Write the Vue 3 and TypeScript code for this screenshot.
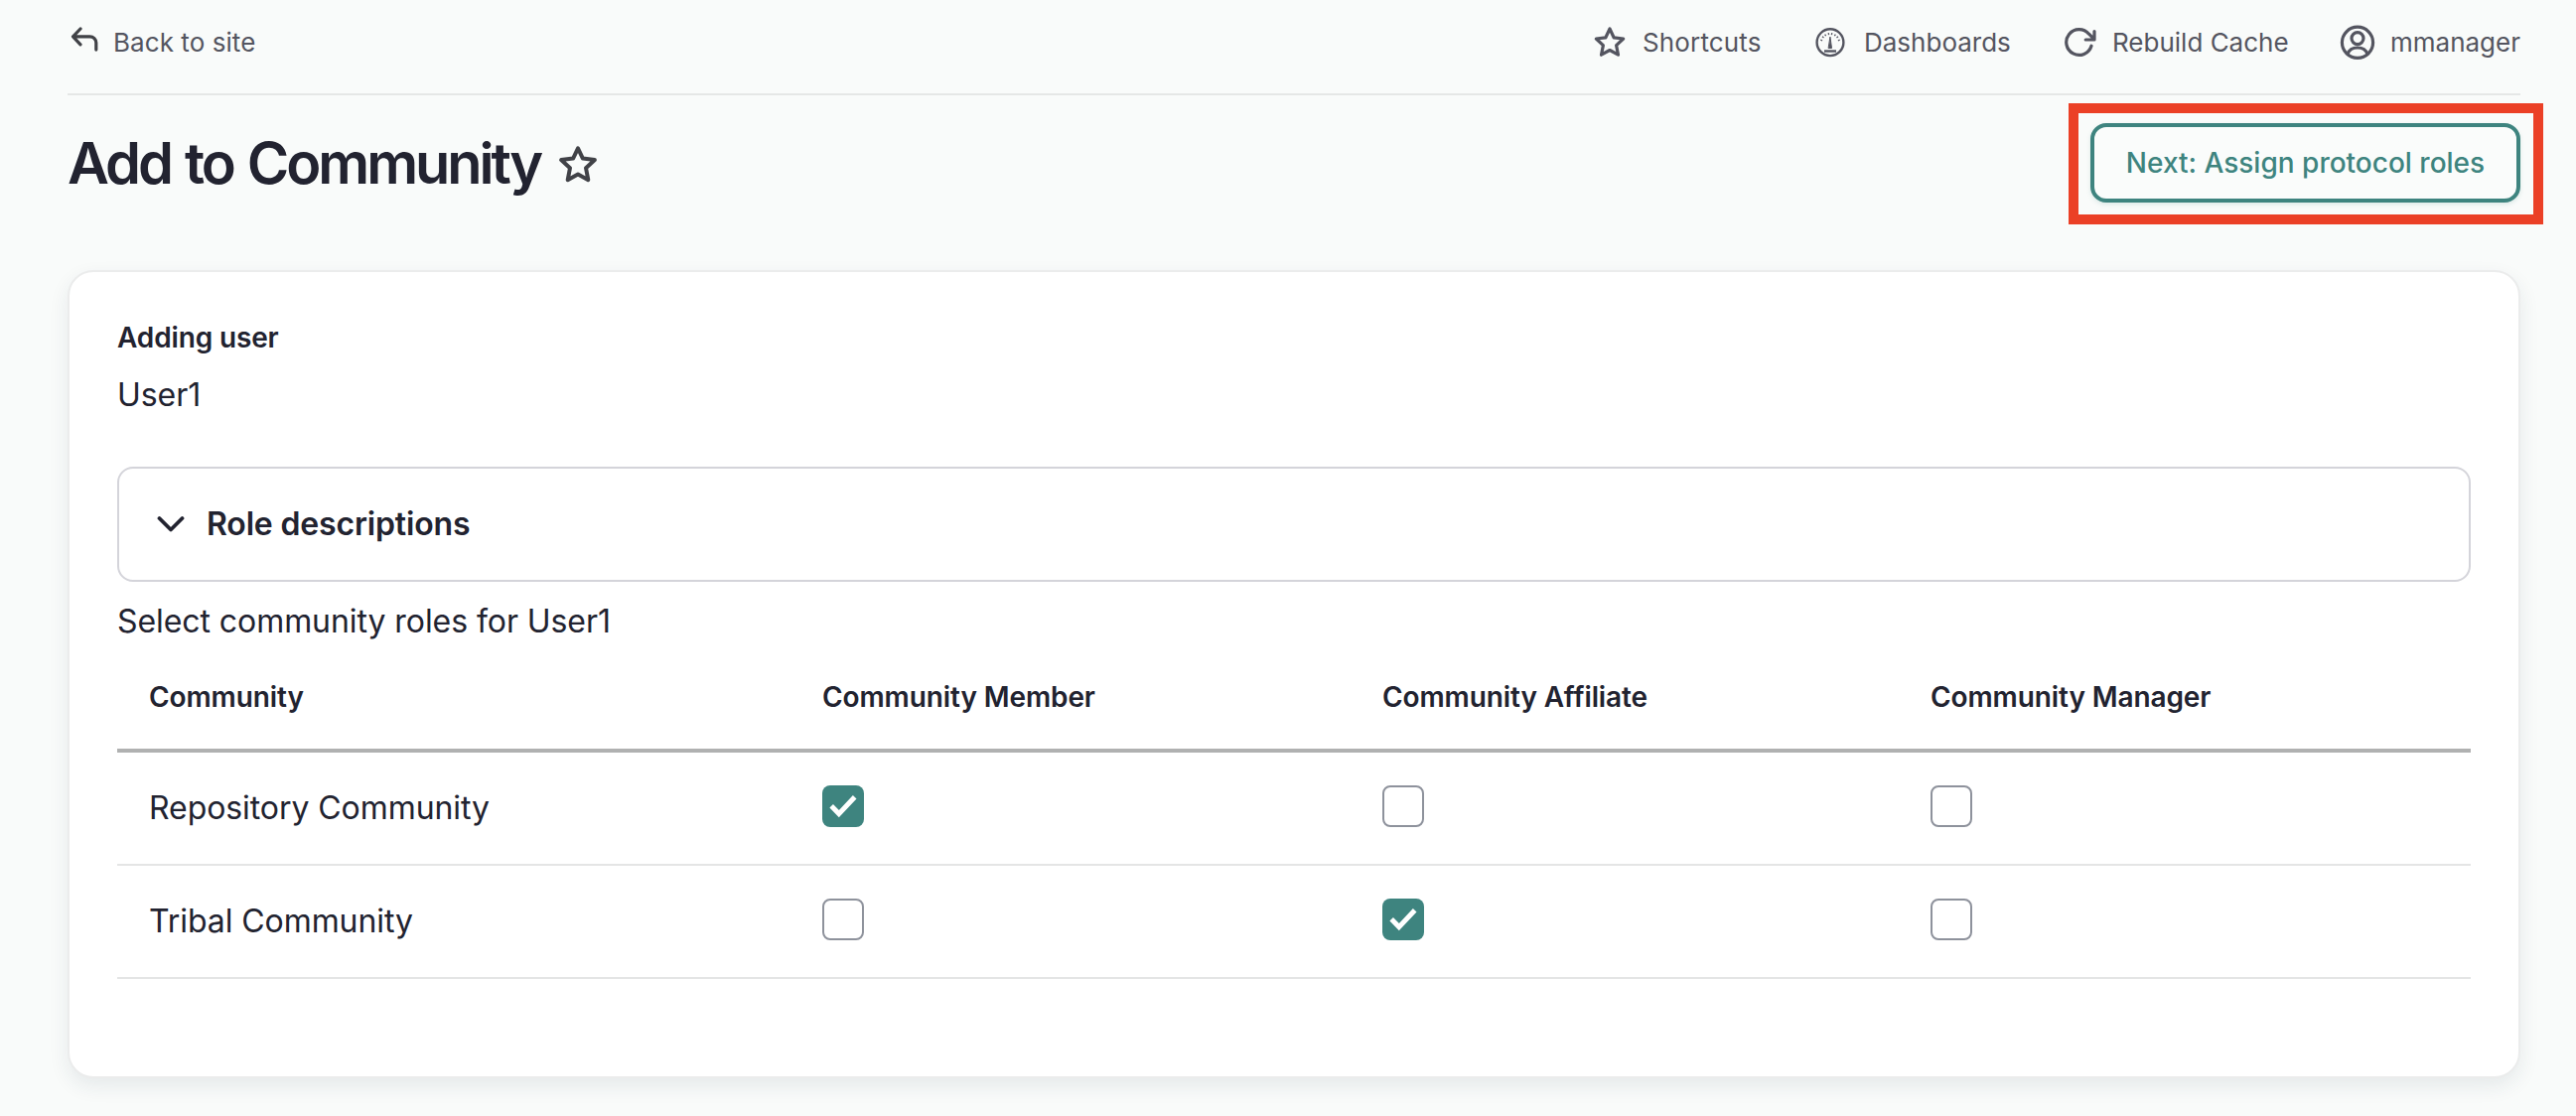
<script setup lang="ts">
import { reactive } from 'vue'

interface Role {
  key: 'member' | 'affiliate' | 'manager'
  label: string
}

interface Community {
  name: string
  roles: Record<Role['key'], boolean>
}

const user = 'User1'

const roles: Role[] = [
  { key: 'member', label: 'Community Member' },
  { key: 'affiliate', label: 'Community Affiliate' },
  { key: 'manager', label: 'Community Manager' },
]

const communities = reactive<Community[]>([
  { name: 'Repository Community', roles: { member: true, affiliate: false, manager: false } },
  { name: 'Tribal Community', roles: { member: false, affiliate: true, manager: false } },
])
</script>

<template>
  <div class="page">
    <header class="toolbar">
      <a class="back">
        <svg class="back-icon" width="28" height="26" viewBox="0 0 28 26">
          <path d="M10 2 2.500 9.800l7.500 8M3 9.800h16.500a6.300 6.300 0 0 1 6.300 6.300v7" />
        </svg>
        <span>Back to site</span>
      </a>
      <nav class="nav">
        <a class="nav-item shortcuts">
          <svg width="34" height="34" viewBox="0 0 34 34" stroke-width="3.400">
            <path d="M17 3l4.100 8.800 9.600 1.200-7.100 6.600 1.900 9.600L17 24.500l-8.500 4.700 1.900-9.600-7.100-6.600 9.600-1.200z" />
          </svg>
          <span>Shortcuts</span>
        </a>
        <a class="nav-item">
          <svg width="34" height="34" viewBox="0 0 34 34">
            <circle class="dial" cx="16" cy="16.700" r="13.400" />
            <path class="ticks" d="M6.300 14.200l1.800.6M8 10.800l1.500 1.200M10.600 8.600l1.100 1.600M14.200 7.200l.4 2M17.800 7.200l-.4 2M21.400 8.600l-1.100 1.600M24 10.800l-1.500 1.200M25.700 14.200l-1.800.6" />
            <path class="needle" d="M16 11.500l1.500 11h-3z" />
            <path class="base" d="M10 25.500h12" />
          </svg>
          <span>Dashboards</span>
        </a>
        <a class="nav-item rebuild">
          <svg width="34" height="34" viewBox="0 0 34 34">
            <path d="M27 20.200A12.900 12.900 0 1 1 24.500 8.200l4.500 4.500M30 5.500V14h-8.800" />
          </svg>
          <span>Rebuild Cache</span>
        </a>
        <a class="nav-item">
          <svg width="36" height="36" viewBox="0 0 36 36">
            <circle cx="18" cy="17.800" r="15.600" />
            <circle cx="18" cy="13.600" r="6" />
            <path d="M8 29.300c1.500-4 5.500-6.300 10-6.300s8.500 2.300 10 6.300" />
          </svg>
          <span>mmanager</span>
        </a>
      </nav>
    </header>

    <div class="heading">
      <h1>Add to Community</h1>
      <svg class="heading-star" width="40" height="40" viewBox="0 0 40 40">
        <path d="M20 4.300l4.900 10.300 12 1.500-8.900 8.100 2.300 12L20 30.500 9.700 36.200l2.300-12-8.900-8.100 12-1.500z" />
      </svg>
      <div class="highlight">
        <button type="button" class="next">Next: Assign protocol roles</button>
      </div>
    </div>

    <main class="card">
      <div class="label">Adding user</div>
      <div class="value">{{ user }}</div>

      <div class="details">
        <svg width="28" height="18" viewBox="0 0 28 18">
          <path d="M2.500 3 14 14.500 25.500 3" />
        </svg>
        <span>Role descriptions</span>
      </div>

      <div class="intro">Select community roles for {{ user }}</div>

      <div class="table">
        <div class="row head">
          <span>Community</span>
          <span v-for="role in roles" :key="role.key">{{ role.label }}</span>
        </div>
        <div v-for="community in communities" :key="community.name" class="row">
          <span>{{ community.name }}</span>
          <span v-for="role in roles" :key="role.key">
            <button
              type="button"
              role="checkbox"
              class="box"
              :class="{ checked: community.roles[role.key] }"
              :aria-checked="community.roles[role.key]"
              @click="community.roles[role.key] = !community.roles[role.key]"
            >
              <svg v-if="community.roles[role.key]" width="42" height="42" viewBox="0 0 42 42">
                <path d="M9.200 20.800l7.600 7.800 15.900-16.800" />
              </svg>
            </button>
          </span>
        </div>
      </div>
    </main>
  </div>
</template>

<style>
body {
  margin: 0;
  background: #f9fbfa;
}
</style>

<style scoped>
.page {
  box-sizing: border-box;
  width: 2594px;
  height: 1124px;
  padding: 0 56px 0 68px;
  overflow: hidden;
  background: #f9fbfa;
  color: #222330;
  font-family: Inter, "Liberation Sans", sans-serif;
  font-size: 32px;
  letter-spacing: -0.070px;
}

svg {
  display: block;
  flex: none;
  fill: none;
  stroke: currentColor;
  stroke-width: 3.200;
  stroke-linecap: round;
  stroke-linejoin: round;
}

.dial {
  stroke-width: 2.400;
}

.ticks {
  stroke-width: 1.300;
  stroke-linecap: butt;
}

.needle {
  fill: currentColor;
  stroke-width: 1;
}

.base {
  stroke-width: 2.400;
  stroke-linecap: butt;
}

.toolbar {
  box-sizing: border-box;
  display: flex;
  justify-content: space-between;
  width: 2470px;
  height: 96px;
  padding-bottom: 9px;
  border-bottom: 2px solid #e5e7e6;
  color: #545560;
  font-size: 26px;
  line-height: 34px;
  white-space: nowrap;
}

.back {
  display: flex;
  align-items: center;
  gap: 15px;
  padding-left: 3px;
  letter-spacing: 0.060px;
}

.back-icon {
  margin-bottom: 6px;
  color: #414247;
}

.nav {
  display: grid;
  grid-template-columns: 223px 252px 277px 182px;
}

.nav-item {
  display: flex;
  align-items: center;
  gap: 16px;
  letter-spacing: 0;
}

.shortcuts {
  letter-spacing: 0.150px;
}

.nav-item:last-child {
  gap: 15px;
}

.rebuild {
  gap: 14px;
}

.heading {
  display: flex;
  width: 2470px;
  height: 176px;
}

h1 {
  margin: 32px 18px 0 0;
  font-size: 57.700px;
  font-weight: 600;
  line-height: 72px;
  letter-spacing: -3.050px;
  word-spacing: 2.500px;
  white-space: nowrap;
}

.heading-star {
  margin-top: 49px;
  stroke-width: 4;
  color: #414247;
}

.highlight {
  box-sizing: border-box;
  width: 478px;
  height: 122px;
  margin: 8px -23px 0 auto;
  padding: 10px 13px 12px 12px;
  border: 10px solid #eb4026;
}

.next {
  box-sizing: border-box;
  width: 433px;
  height: 80px;
  padding: 0;
  border: 4px solid #3e847f;
  border-radius: 16px;
  background: #fafcfb;
  box-shadow: 0 2px 4px rgba(62, 132, 127, 0.15);
  color: #3e847f;
  font: 500 28px/72px Inter, "Liberation Sans", sans-serif;
  letter-spacing: 0;
  white-space: nowrap;
}

.card {
  box-sizing: border-box;
  width: 2470px;
  height: 814px;
  padding: 46px 48px 0;
  border: 2px solid #ebecec;
  border-radius: 26px;
  background: #fff;
  box-shadow: 0 8px 20px rgba(34, 51, 80, 0.09);
}

.label {
  font-size: 28px;
  font-weight: 600;
  line-height: 40px;
  letter-spacing: -0.140px;
}

.value {
  margin-top: 14px;
  line-height: 48px;
}

.details {
  box-sizing: border-box;
  display: flex;
  align-items: center;
  gap: 22px;
  height: 116px;
  margin-top: 48px;
  padding-left: 38px;
  border: 2px solid #d4d4da;
  border-radius: 16px;
  font-weight: 600;
  letter-spacing: -0.160px;
}

.details svg {
  stroke-width: 3.800;
}

.details span {
  padding-bottom: 2px;
}

.intro {
  margin-top: 16px;
  line-height: 48px;
}

.table {
  margin-top: 12px;
}

.row {
  box-sizing: border-box;
  display: grid;
  grid-template-columns: 678px 564px 552px 576px;
  align-items: center;
  height: 114px;
  padding-bottom: 2px;
  border-bottom: 2px solid #e4e5e5;
}

.row > span {
  padding-left: 32px;
}

.head {
  height: 96px;
  padding-bottom: 12px;
  border-bottom: 4px solid #b0b1b1;
  font-size: 28px;
  font-weight: 600;
  letter-spacing: -0.100px;
}

.box {
  box-sizing: border-box;
  display: block;
  width: 42px;
  height: 42px;
  margin-bottom: 2px;
  padding: 0;
  border: 2px solid #8e929c;
  border-radius: 8px;
  background: #fff;
}

.checked {
  border: 0;
  background: #3e847f;
  color: #fff;
}

.checked svg {
  stroke-width: 5;
  stroke-linecap: butt;
  stroke-linejoin: miter;
}
</style>
